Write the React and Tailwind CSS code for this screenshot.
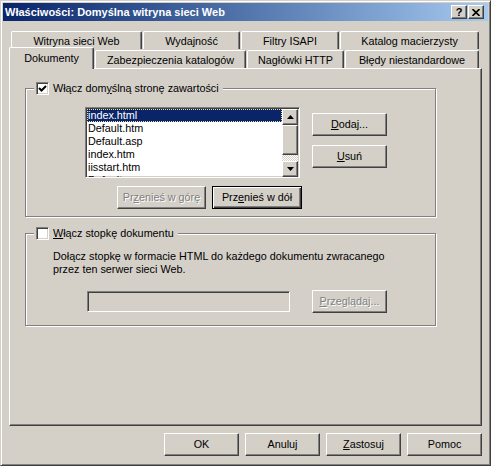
import React from 'react';

const raised = 'border border-white border-r-[#404040] border-b-[#404040] shadow-[inset_-1px_-1px_#808080]';
const sunken = 'border border-[#808080] border-r-white border-b-white shadow-[inset_1px_1px_#404040,inset_-1px_-1px_#D4D0C8]';
const etched = 'border border-[#808080] shadow-[inset_1px_1px_#fff,1px_1px_#fff]';
const disabledText = 'text-[#808080] [text-shadow:1px_1px_#fff]';

function Btn({ children, w = 'w-[75px]', def, disabled }) {
  const frame = def
    ? 'border border-black shadow-[inset_1px_1px_#fff,inset_-1px_-1px_#404040,inset_-2px_-2px_#808080]'
    : raised;
  return (
    <div className={`${frame} ${w} h-[23px] shrink-0 bg-[#D4D0C8] flex items-center justify-center ${disabled ? disabledText : ''}`}>
      {children}
    </div>
  );
}

function Check({ checked }) {
  return (
    <div className={`${sunken} w-[13px] h-[13px] bg-white shrink-0 flex items-center justify-center`}>
      {checked && (
        <svg width="9" height="9" viewBox="0 0 9 9">
          <polyline points="1,4 3.5,6.5 8,2" fill="none" stroke="#000" strokeWidth="2" />
        </svg>
      )}
    </div>
  );
}

function Arrow({ down }) {
  return (
    <div className={`${raised} w-[16px] h-[16px] bg-[#D4D0C8] flex items-center justify-center`}>
      <svg width="7" height="4" viewBox="0 0 7 4">
        {down ? <polygon points="0,0 7,0 3.5,4" fill="#000" /> : <polygon points="0,4 7,4 3.5,0" fill="#000" />}
      </svg>
    </div>
  );
}

function Tab({ label, w, selected }) {
  return (
    <div
      className={`${w} shrink-0 border-t border-l border-white border-r border-r-[#404040] shadow-[inset_-1px_0_#808080] rounded-t-[2px] bg-[#D4D0C8] flex justify-center ${
        selected ? 'relative z-10 h-[22px] -mb-px pt-[4px]' : 'h-[18px] pt-[3px]'
      }`}
    >
      {label}
    </div>
  );
}

const files = ['index.html', 'Default.htm', 'Default.asp', 'index.htm', 'iisstart.htm', 'Default.aspx'];

export default function App() {
  return (
    <div className="w-[491px] h-[466px] bg-[#D4D0C8] border border-[#D4D0C8] border-r-[#404040] border-b-[#404040] shadow-[inset_1px_1px_#fff,inset_-1px_-1px_#808080] p-[2px] font-['Liberation_Sans',Arial,sans-serif] text-[10.8px] leading-[13px] text-black overflow-hidden">
      {/* Title bar */}
      <div className="h-[18px] bg-gradient-to-r from-[#0A246A] to-[#A6CAF0] flex items-center pl-[2px] pr-[4px]">
        <div className="text-white font-bold text-[11px] flex-1">Właściwości: Domyślna witryna sieci Web</div>
        <div className={`${raised} w-[16px] h-[14px] bg-[#D4D0C8] flex items-center justify-center font-bold text-[11px] leading-none`}>?</div>
        <div className={`${raised} w-[16px] h-[14px] bg-[#D4D0C8] flex items-center justify-center ml-[1px]`}>
          <svg width="8" height="7" viewBox="0 0 8 7">
            <path d="M0.5 0 L7.5 7 M7.5 0 L0.5 7" stroke="#000" strokeWidth="1.6" />
          </svg>
        </div>
      </div>

      <div className="pl-[6px]">
        {/* Tabs */}
        <div className="mt-[10px] h-[18px] ml-[2px] flex gap-[1px]">
          <Tab label="Witryna sieci Web" w="w-[131px]" />
          <Tab label="Wydajność" w="w-[97px]" />
          <Tab label="Filtry ISAPI" w="w-[98px]" />
          <Tab label="Katalog macierzysty" w="w-[139px]" />
        </div>
        <div className="h-[19px] flex items-end gap-[1px]">
          <Tab label="Dokumenty" w="w-[85px]" selected />
          <Tab label="Zabezpieczenia katalogów" w="w-[151px]" />
          <Tab label="Nagłówki HTTP" w="w-[97px]" />
          <Tab label="Błędy niestandardowe" w="w-[134px]" />
        </div>

        {/* Panel */}
        <div className={`${raised} w-[473px] h-[358px] pl-[15px] pt-[19px]`}>
          {/* Group 1 */}
          <div className={`${etched} relative w-[411px] h-[129px]`}>
            <div className="absolute left-[8px] -top-[7px] bg-[#D4D0C8] flex items-center gap-[4px] pl-[2px] pr-[4px]">
              <Check checked />
              <span>Włącz dom<u>y</u>ślną stronę zawartości</span>
            </div>
            <div className="flex mt-[18px] ml-[59px]">
              <div className={`${sunken} w-[215px] h-[71px] bg-white flex px-[1px] pt-[1px]`}>
                <div className="flex-1 overflow-hidden">
                  {files.map((f, i) => (
                    <div
                      key={f}
                      className={`h-[13px] pl-[1px] whitespace-nowrap ${
                        i === 0 ? 'bg-[#0A246A] text-white outline outline-1 outline-dotted outline-[#F0E0A0] -outline-offset-1' : ''
                      }`}
                    >
                      {f}
                    </div>
                  ))}
                </div>
                <div className="w-[16px] flex flex-col">
                  <Arrow />
                  <div className={`${raised} h-[30px] bg-[#D4D0C8]`} />
                  <div className="flex-1 bg-[repeating-conic-gradient(#D4D0C8_0_25%,#fff_0_50%)] bg-[length:2px_2px]" />
                  <Arrow down />
                </div>
              </div>
              <div className="ml-[12px] mt-[6px] flex flex-col gap-[9px]">
                <Btn><span><u>D</u>odaj...</span></Btn>
                <Btn><span><u>U</u>suń</span></Btn>
              </div>
            </div>
            <div className="flex mt-[8px] ml-[91px] gap-[6px]">
              <Btn w="w-[89px]" disabled><span>Pr<u>z</u>enieś w górę</span></Btn>
              <Btn w="w-[90px]" def><span>Prz<u>e</u>nieś w dół</span></Btn>
            </div>
          </div>

          {/* Group 2 */}
          <div className={`${etched} relative w-[411px] h-[93px] mt-[16px]`}>
            <div className="absolute left-[8px] -top-[7px] bg-[#D4D0C8] flex items-center gap-[4px] pl-[2px] pr-[4px]">
              <Check />
              <span><u>W</u>łącz stopkę dokumentu</span>
            </div>
            <div className="pl-[27px] pt-[16px]">
              Dołącz stopkę w formacie HTML do każdego dokumentu zwracanego
              <br />
              przez ten serwer sieci Web.
            </div>
            <div className="flex items-center mt-[14px] ml-[61px] gap-[22px]">
              <div className={`${sunken} w-[203px] h-[21px] bg-[#D4D0C8]`} />
              <Btn disabled><span><u>P</u>rzeglądaj...</span></Btn>
            </div>
          </div>
        </div>

        {/* Dialog buttons */}
        <div className="w-[473px] flex justify-end gap-[6px] mt-[7px]">
          <Btn>OK</Btn>
          <Btn>Anuluj</Btn>
          <Btn><span><u>Z</u>astosuj</span></Btn>
          <Btn>Pomoc</Btn>
        </div>
      </div>
    </div>
  );
}
